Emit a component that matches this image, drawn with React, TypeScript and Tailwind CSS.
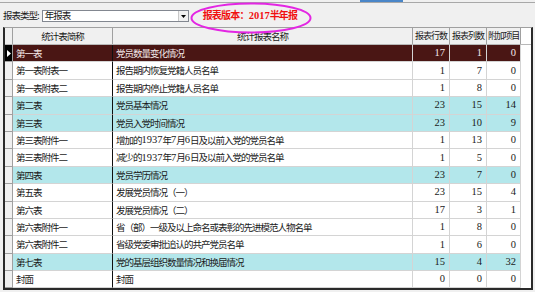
import React from "react";

type Row = [string, string, number, number, number, "dark" | "cyan" | ""];

const rows: Row[] = [
  ["第一表", "党员数量变化情况", 17, 1, 0, "dark"],
  ["第一表附表一", "报告期内恢复党籍人员名单", 1, 7, 0, ""],
  ["第一表附表二", "报告期内停止党籍人员名单", 1, 8, 0, ""],
  ["第二表", "党员基本情况", 23, 15, 14, "cyan"],
  ["第三表", "党员入党时间情况", 23, 10, 9, "cyan"],
  ["第三表附件一", "增加的1937年7月6日及以前入党的党员名单", 1, 13, 0, ""],
  ["第三表附件二", "减少的1937年7月6日及以前入党的党员名单", 1, 5, 0, ""],
  ["第四表", "党员学历情况", 23, 7, 0, "cyan"],
  ["第五表", "发展党员情况（一）", 23, 15, 4, ""],
  ["第六表", "发展党员情况（二）", 17, 3, 1, ""],
  ["第六表附件一", "省（部）一级及以上命名或表彰的先进模范人物名单", 1, 8, 0, ""],
  ["第六表附件二", "省级党委审批追认的共产党员名单", 1, 6, 0, ""],
  ["第七表", "党的基层组织数量情况和换届情况", 15, 4, 32, "cyan"],
  ["封面", "封面", 0, 0, 0, ""],
];

const cjk = { fontFamily: '"Noto Sans CJK SC", "Noto Sans", sans-serif' };
const num = { fontFamily: '"Liberation Serif", serif' };

export default function App() {
  return (
    <div
      className="w-[535px] h-[292px] bg-[#f0f0f0] overflow-hidden relative text-[#1a1a1a]"
      style={cjk}
    >
      {/* top strip */}
      <div className="h-[3px] border-b border-[#a8a8a8] flex">
        <div className="ml-[360px] w-[43px] h-[2px] bg-[#4a86c8]" />
      </div>

      {/* toolbar */}
      <div className="h-[24px] flex items-center pl-[3px] pt-[2px]">
        <span className="text-[9.5px] tracking-[-1px] leading-none">报表类型:</span>
        <div className="ml-[3px] w-[147px] h-[12px] border border-[#828790] bg-white flex items-center">
          <span className="pl-[2px] text-[9.5px] tracking-[-1px] leading-none flex-1">年报表</span>
          <div className="w-[10px] h-[10px] bg-[#f0f0f0] border-l border-[#c8c8c8] flex items-center justify-center">
            <svg width="5" height="3" viewBox="0 0 5 3">
              <polygon points="0,0 5,0 2.5,3" fill="#000" />
            </svg>
          </div>
        </div>
        <span className="ml-[14px] text-[10px] font-bold text-[#f01010] leading-none tracking-[-0.8px]">
          报表版本：<span style={num} className="text-[10.5px] tracking-[0px]">2017</span>半年报
        </span>
      </div>

      {/* ellipse marker */}
      <svg className="absolute left-[190px] top-[2px]" width="122" height="32" viewBox="0 0 122 32">
        <ellipse cx="61" cy="16" rx="59.5" ry="14.5" fill="none" stroke="#e326e3" strokeWidth="2" />
      </svg>

      {/* grid */}
      <div className="ml-[3px] w-[530px] border-l-2 border-r-2 border-b-2 border-[#2a2a2a] border-t border-t-[#a0a0a0] bg-white">
        {/* header */}
        <div className="flex h-[17px] border-b border-[#b8b8b8]">
          <div className="w-[8px] bg-[#f0f0f0] border-r border-[#a0a0a0]" />
          <div className="w-[100px] bg-[#f0f0f0] border-r border-[#a0a0a0] flex items-center justify-center text-[9.5px] tracking-[-1px]">
            统计表简称
          </div>
          <div className="w-[300px] bg-[#f0f0f0] border-r border-[#a0a0a0] flex items-center justify-center text-[9.5px] tracking-[-1px]">
            统计报表名称
          </div>
          <div className="w-[37px] bg-[#f0f0f0] border-r border-[#a0a0a0] flex items-center justify-center text-[9px] tracking-[-1px] whitespace-nowrap overflow-hidden">
            报表行数
          </div>
          <div className="w-[37px] bg-[#f0f0f0] border-r border-[#a0a0a0] flex items-center justify-center text-[9px] tracking-[-1px] whitespace-nowrap overflow-hidden">
            报表列数
          </div>
          <div className="w-[34px] bg-[#f0f0f0] border-r border-[#a0a0a0] flex items-center justify-center text-[9px] tracking-[-1.2px] whitespace-nowrap overflow-hidden">
            附加项目
          </div>
          <div className="flex-1" />
        </div>

        {rows.map((r, i) => {
          const bg =
            r[5] === "dark" ? "bg-[#4a1614] text-[#f4e8e8]" : r[5] === "cyan" ? "bg-[#b3e7eb]" : "bg-white";
          return (
            <div key={i} className="flex h-[17.4px]">
              <div
                className={`w-[8px] border-r border-b border-[#a0a0a0] flex items-center justify-center ${
                  i === 0 ? "bg-black" : "bg-[#f0f0f0]"
                }`}
              >
                {i === 0 && (
                  <svg width="4" height="7" viewBox="0 0 4 7">
                    <polygon points="0,0 4,3.5 0,7" fill="#fff" />
                  </svg>
                )}
              </div>
              <div
                className={`w-[100px] border-r border-r-[#101010] border-b border-b-[#d4d4d4] flex items-center pl-[3px] text-[9.5px] tracking-[-1px] whitespace-nowrap overflow-hidden ${bg}`}
              >
                {r[0]}
              </div>
              <div
                className={`w-[300px] border-r border-b border-[#d4d4d4] flex items-center pl-[3px] text-[9.5px] tracking-[-1px] whitespace-nowrap overflow-hidden ${bg}`}
              >
                {r[1].split(/(\d+)/).map((s, k) =>
                  /^\d+$/.test(s) ? (
                    <span key={k} style={num} className="text-[10.5px] tracking-[0px]">
                      {s}
                    </span>
                  ) : (
                    <span key={k}>{s}</span>
                  )
                )}
              </div>
              {[r[2], r[3], r[4]].map((v, j) => (
                <div
                  key={j}
                  style={num}
                  className={`${j === 2 ? "w-[34px]" : "w-[37px]"} border-r border-b border-[#d4d4d4] flex items-center justify-end pr-[4px] text-[10.5px] ${bg}`}
                >
                  {v}
                </div>
              ))}
              <div className="flex-1 bg-white" />
            </div>
          );
        })}
      </div>
    </div>
  );
}
